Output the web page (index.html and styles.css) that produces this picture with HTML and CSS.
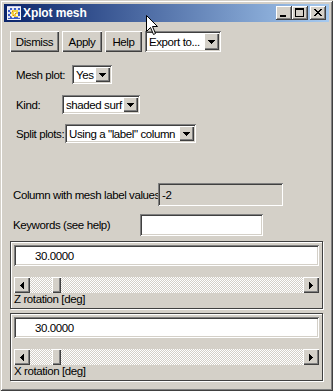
FILE: index.html
```html
<!DOCTYPE html>
<html>
<head>
<meta charset="utf-8">
<link rel="stylesheet" href="styles.css">
</head>
<body>
<div class="window">
  <div class="titlebar">
    <svg class="app-icon" width="16" height="16" viewBox="0 0 16 16" shape-rendering="crispEdges">
      <rect x="1" y="1" width="14" height="14" fill="#f4f4f4"/>
      <rect x="1" y="1" width="14" height="1" fill="#c8c8e8"/>
      <rect x="2" y="3" width="12" height="11" fill="#3c5cc8"/>
      <rect x="5" y="5" width="7" height="7" fill="#f0d040"/>
      <path d="M2 3h2v2H2zM6 3h2v2H6zM10 3h2v2h-2zM4 5h2v2H4zM12 5h2v2h-2zM2 7h2v2H2zM8 7h2v2H8zM4 9h2v2H4zM10 9h2v2h-2zM2 11h2v2H2zM6 11h2v2H6zM12 11h2v2h-2z" fill="#ffffff" opacity="0.8"/>
      <path d="M6 6h1v1H6zM9 8h1v1H9zM7 10h1v1H7z" fill="#e07020"/>
    </svg>
    <span class="title">Xplot mesh</span>
    <div class="caption-buttons">
      <span class="cap-btn">
        <svg width="16" height="14" viewBox="0 0 16 14" shape-rendering="crispEdges"><path d="M4 9h6v2H4z" fill="#000"/></svg>
      </span>
      <span class="cap-btn">
        <svg width="16" height="14" viewBox="0 0 16 14" shape-rendering="crispEdges"><path d="M3 2h9v2H3zM3 4h1v7H3zM11 4h1v7h-1zM3 10h9v1H3z" fill="#000"/></svg>
      </span>
      <span class="cap-btn cap-close">
        <svg width="16" height="14" viewBox="0 0 16 14" shape-rendering="crispEdges"><path d="M4 3h2v1H4zM10 3h2v1h-2zM5 4h2v1H5zM9 4h2v1H9zM6 5h4v1H6zM7 6h2v1H7zM6 7h4v1H6zM5 8h2v1H5zM9 8h2v1H9zM4 9h2v1H4zM10 9h2v1h-2z" fill="#000"/></svg>
      </span>
    </div>
  </div>

  <div class="content">
    <div class="toolbar">
      <div class="btn btn-dismiss">Dismiss</div>
      <div class="btn btn-apply">Apply</div>
      <div class="btn btn-help">Help</div>
      <div class="combo combo-export">
        <span class="combo-text">Export to...</span>
        <span class="combo-arrow"><svg width="7" height="4" viewBox="0 0 7 4" shape-rendering="crispEdges"><path d="M0 0h7v1H0zM1 1h5v1H1zM2 2h3v1H2zM3 3h1v1H3z" fill="#000"/></svg></span>
      </div>
    </div>

    <div class="opt-row row-mesh">
      <span class="label lbl-mesh">Mesh plot:</span>
      <div class="combo combo-yes">
        <span class="combo-text">Yes</span>
        <span class="combo-arrow"><svg width="7" height="4" viewBox="0 0 7 4" shape-rendering="crispEdges"><path d="M0 0h7v1H0zM1 1h5v1H1zM2 2h3v1H2zM3 3h1v1H3z" fill="#000"/></svg></span>
      </div>
    </div>

    <div class="opt-row row-kind">
      <span class="label lbl-kind">Kind:</span>
      <div class="combo combo-kind">
        <span class="combo-text">shaded surf</span>
        <span class="combo-arrow"><svg width="7" height="4" viewBox="0 0 7 4" shape-rendering="crispEdges"><path d="M0 0h7v1H0zM1 1h5v1H1zM2 2h3v1H2zM3 3h1v1H3z" fill="#000"/></svg></span>
      </div>
    </div>

    <div class="opt-row row-split">
      <span class="label lbl-split">Split plots:</span>
      <div class="combo combo-split">
        <span class="combo-text">Using a "label" column</span>
        <span class="combo-arrow"><svg width="7" height="4" viewBox="0 0 7 4" shape-rendering="crispEdges"><path d="M0 0h7v1H0zM1 1h5v1H1zM2 2h3v1H2zM3 3h1v1H3z" fill="#000"/></svg></span>
      </div>
    </div>

    <div class="field-row row-column">
      <span class="label lbl-column">Column with mesh label values</span>
      <div class="entry entry-disabled entry-column">-2</div>
    </div>

    <div class="field-row row-keywords">
      <span class="label lbl-keywords">Keywords (see help)</span>
      <div class="entry entry-keywords"></div>
    </div>

    <div class="frame frame-z">
      <div class="entry entry-value">30.0000</div>
      <div class="scale">
        <span class="sb-btn"><svg width="4" height="7" viewBox="0 0 4 7" shape-rendering="crispEdges"><path d="M3 0h1v7H3zM2 1h1v5H2zM1 2h1v3H1zM0 3h1v1H0z" fill="#000"/></svg></span>
        <div class="trough"><span class="thumb"></span></div>
        <span class="sb-btn"><svg width="4" height="7" viewBox="0 0 4 7" shape-rendering="crispEdges"><path d="M0 0h1v7H0zM1 1h1v5H1zM2 2h1v3H2zM3 3h1v1H3z" fill="#000"/></svg></span>
      </div>
      <div class="scale-label">Z rotation [deg]</div>
    </div>

    <div class="frame frame-x">
      <div class="entry entry-value">30.0000</div>
      <div class="scale">
        <span class="sb-btn"><svg width="4" height="7" viewBox="0 0 4 7" shape-rendering="crispEdges"><path d="M3 0h1v7H3zM2 1h1v5H2zM1 2h1v3H1zM0 3h1v1H0z" fill="#000"/></svg></span>
        <div class="trough"><span class="thumb"></span></div>
        <span class="sb-btn"><svg width="4" height="7" viewBox="0 0 4 7" shape-rendering="crispEdges"><path d="M0 0h1v7H0zM1 1h1v5H1zM2 2h1v3H2zM3 3h1v1H3z" fill="#000"/></svg></span>
      </div>
      <div class="scale-label">X rotation [deg]</div>
    </div>
  </div>

  <svg class="cursor" width="13" height="21" viewBox="0 0 13 21">
    <path d="M0.5 0.5 L0.5 16.5 L4.5 12.5 L7.5 19.5 L9.5 18.5 L6.5 11.5 L11.5 11.5 Z" fill="#fff" stroke="#000" stroke-width="1" stroke-linejoin="miter"/>
  </svg>
</div>
</body>
</html>
```

FILE: styles.css
```css
* { box-sizing: border-box; }

html, body {
  margin: 0;
  padding: 0;
}

body {
  width: 333px;
  height: 391px;
  overflow: hidden;
  background: #d4d0c8;
  font-family: "Liberation Sans", Arial, sans-serif;
  font-size: 11.5px;
  letter-spacing: -0.4px;
  color: #000;
}

.window {
  position: relative;
  width: 333px;
  height: 391px;
  padding: 4px;
  background: #d4d0c8;
  box-shadow: inset 1px 1px #d4d0c8, inset -1px -1px #404040, inset 2px 2px #ffffff, inset -2px -2px #808080;
  display: flex;
  flex-direction: column;
}

/* Title bar */
.titlebar {
  height: 18px;
  flex: none;
  display: flex;
  align-items: center;
  padding: 0 3px 0 2px;
  background: linear-gradient(to right, #0a246a, #a6caf0);
  color: #fff;
}

.app-icon {
  flex: none;
  display: block;
}

.title {
  margin-left: 1px;
  font-weight: bold;
  font-size: 12px;
  letter-spacing: -0.1px;
  white-space: nowrap;
}

.caption-buttons {
  margin-left: auto;
  display: flex;
}

.cap-btn {
  width: 16px;
  height: 14px;
  display: block;
  background: #d4d0c8;
  box-shadow: inset -1px -1px #404040, inset 1px 1px #ffffff, inset -2px -2px #808080;
}

.cap-btn svg { display: block; }

.cap-close { margin-left: 2px; }

/* Content */
.content {
  flex: 1;
  display: flex;
  flex-direction: column;
  padding: 0 6px;
}

.toolbar {
  margin-top: 9px;
  height: 21px;
  display: flex;
  gap: 3px;
}

.btn {
  height: 21px;
  display: flex;
  align-items: center;
  justify-content: center;
  background: #d4d0c8;
  box-shadow: inset 1px 1px #ffffff, inset -1px -1px #404040, inset -2px -2px #808080;
  white-space: nowrap;
}

.btn-dismiss { width: 49px; }
.btn-apply { width: 40px; }
.btn-help { width: 37px; }

.combo {
  display: flex;
  align-items: stretch;
  background: #fff;
  padding: 2px;
  box-shadow: inset 1px 1px #808080, inset -1px -1px #ffffff, inset 2px 2px #404040, inset -2px -2px #d4d0c8;
}

.combo-text {
  flex: 1;
  display: flex;
  align-items: center;
  padding-left: 2px;
  white-space: nowrap;
  overflow: hidden;
}

.combo-arrow {
  flex: none;
  width: 15px;
  display: flex;
  align-items: center;
  justify-content: center;
  background: #d4d0c8;
  box-shadow: inset 1px 1px #ffffff, inset -1px -1px #404040, inset -2px -2px #808080;
}

.combo-arrow svg { display: block; }

.combo-export { width: 76px; height: 21px; }
.combo-yes { width: 40px; height: 19px; }
.combo-kind { width: 78px; height: 19px; }
.combo-split { width: 131px; height: 19px; }

.opt-row {
  display: flex;
  align-items: center;
  padding-left: 6px;
  height: 19px;
}

.row-mesh { margin-top: 13px; }
.row-kind { margin-top: 11px; }
.row-split { margin-top: 10px; }

.label {
  flex: none;
  white-space: nowrap;
}

.lbl-mesh { width: 56px; }
.lbl-kind { width: 46px; }
.lbl-split { width: 49px; }

.field-row {
  display: flex;
  align-items: center;
  padding-left: 3px;
}

.row-column { margin-top: 40px; height: 23px; }
.row-keywords { margin-top: 8px; height: 22px; }

.lbl-column { width: 145px; }
.lbl-keywords { width: 127px; }

.entry {
  height: 100%;
  display: flex;
  align-items: center;
  background: #fff;
  padding-left: 4px;
  box-shadow: inset 1px 1px #808080, inset -1px -1px #ffffff, inset 2px 2px #404040, inset -2px -2px #d4d0c8;
  white-space: nowrap;
}

.entry-disabled { background: #d4d0c8; }

.entry-column { width: 125px; }
.entry-keywords { width: 123px; }

/* Frames with scale */
.frame {
  height: 68px;
  border: 1px solid #404040;
  box-shadow: 1px 1px 0 #ffffff, inset 1px 1px 0 #ffffff;
  padding: 3px 3px 0 3px;
  display: flex;
  flex-direction: column;
}

.frame-z { margin-top: 5px; }
.frame-x { margin-top: 4px; }

.entry-value {
  height: 21px;
  flex: none;
  padding-left: 21px;
}

.scale {
  margin-top: 11px;
  height: 16px;
  flex: none;
  display: flex;
}

.sb-btn {
  width: 16px;
  height: 16px;
  flex: none;
  display: flex;
  align-items: center;
  justify-content: center;
  background: #d4d0c8;
  box-shadow: inset 1px 1px #ffffff, inset -1px -1px #404040, inset -2px -2px #808080;
}

.sb-btn svg { display: block; }

.trough {
  flex: 1;
  display: flex;
  background-image: repeating-conic-gradient(#ffffff 0% 25%, #d4d0c8 0% 50%);
  background-size: 2px 2px;
}

.thumb {
  margin-left: 22px;
  width: 9px;
  height: 16px;
  background: #d4d0c8;
  box-shadow: inset 1px 1px #ffffff, inset -1px -1px #404040, inset -2px -2px #808080;
}

.scale-label {
  height: 13px;
  line-height: 13px;
  white-space: nowrap;
}

/* Mouse pointer overlay */
.cursor {
  position: absolute;
  left: 146px;
  top: 15px;
  display: block;
}
```
